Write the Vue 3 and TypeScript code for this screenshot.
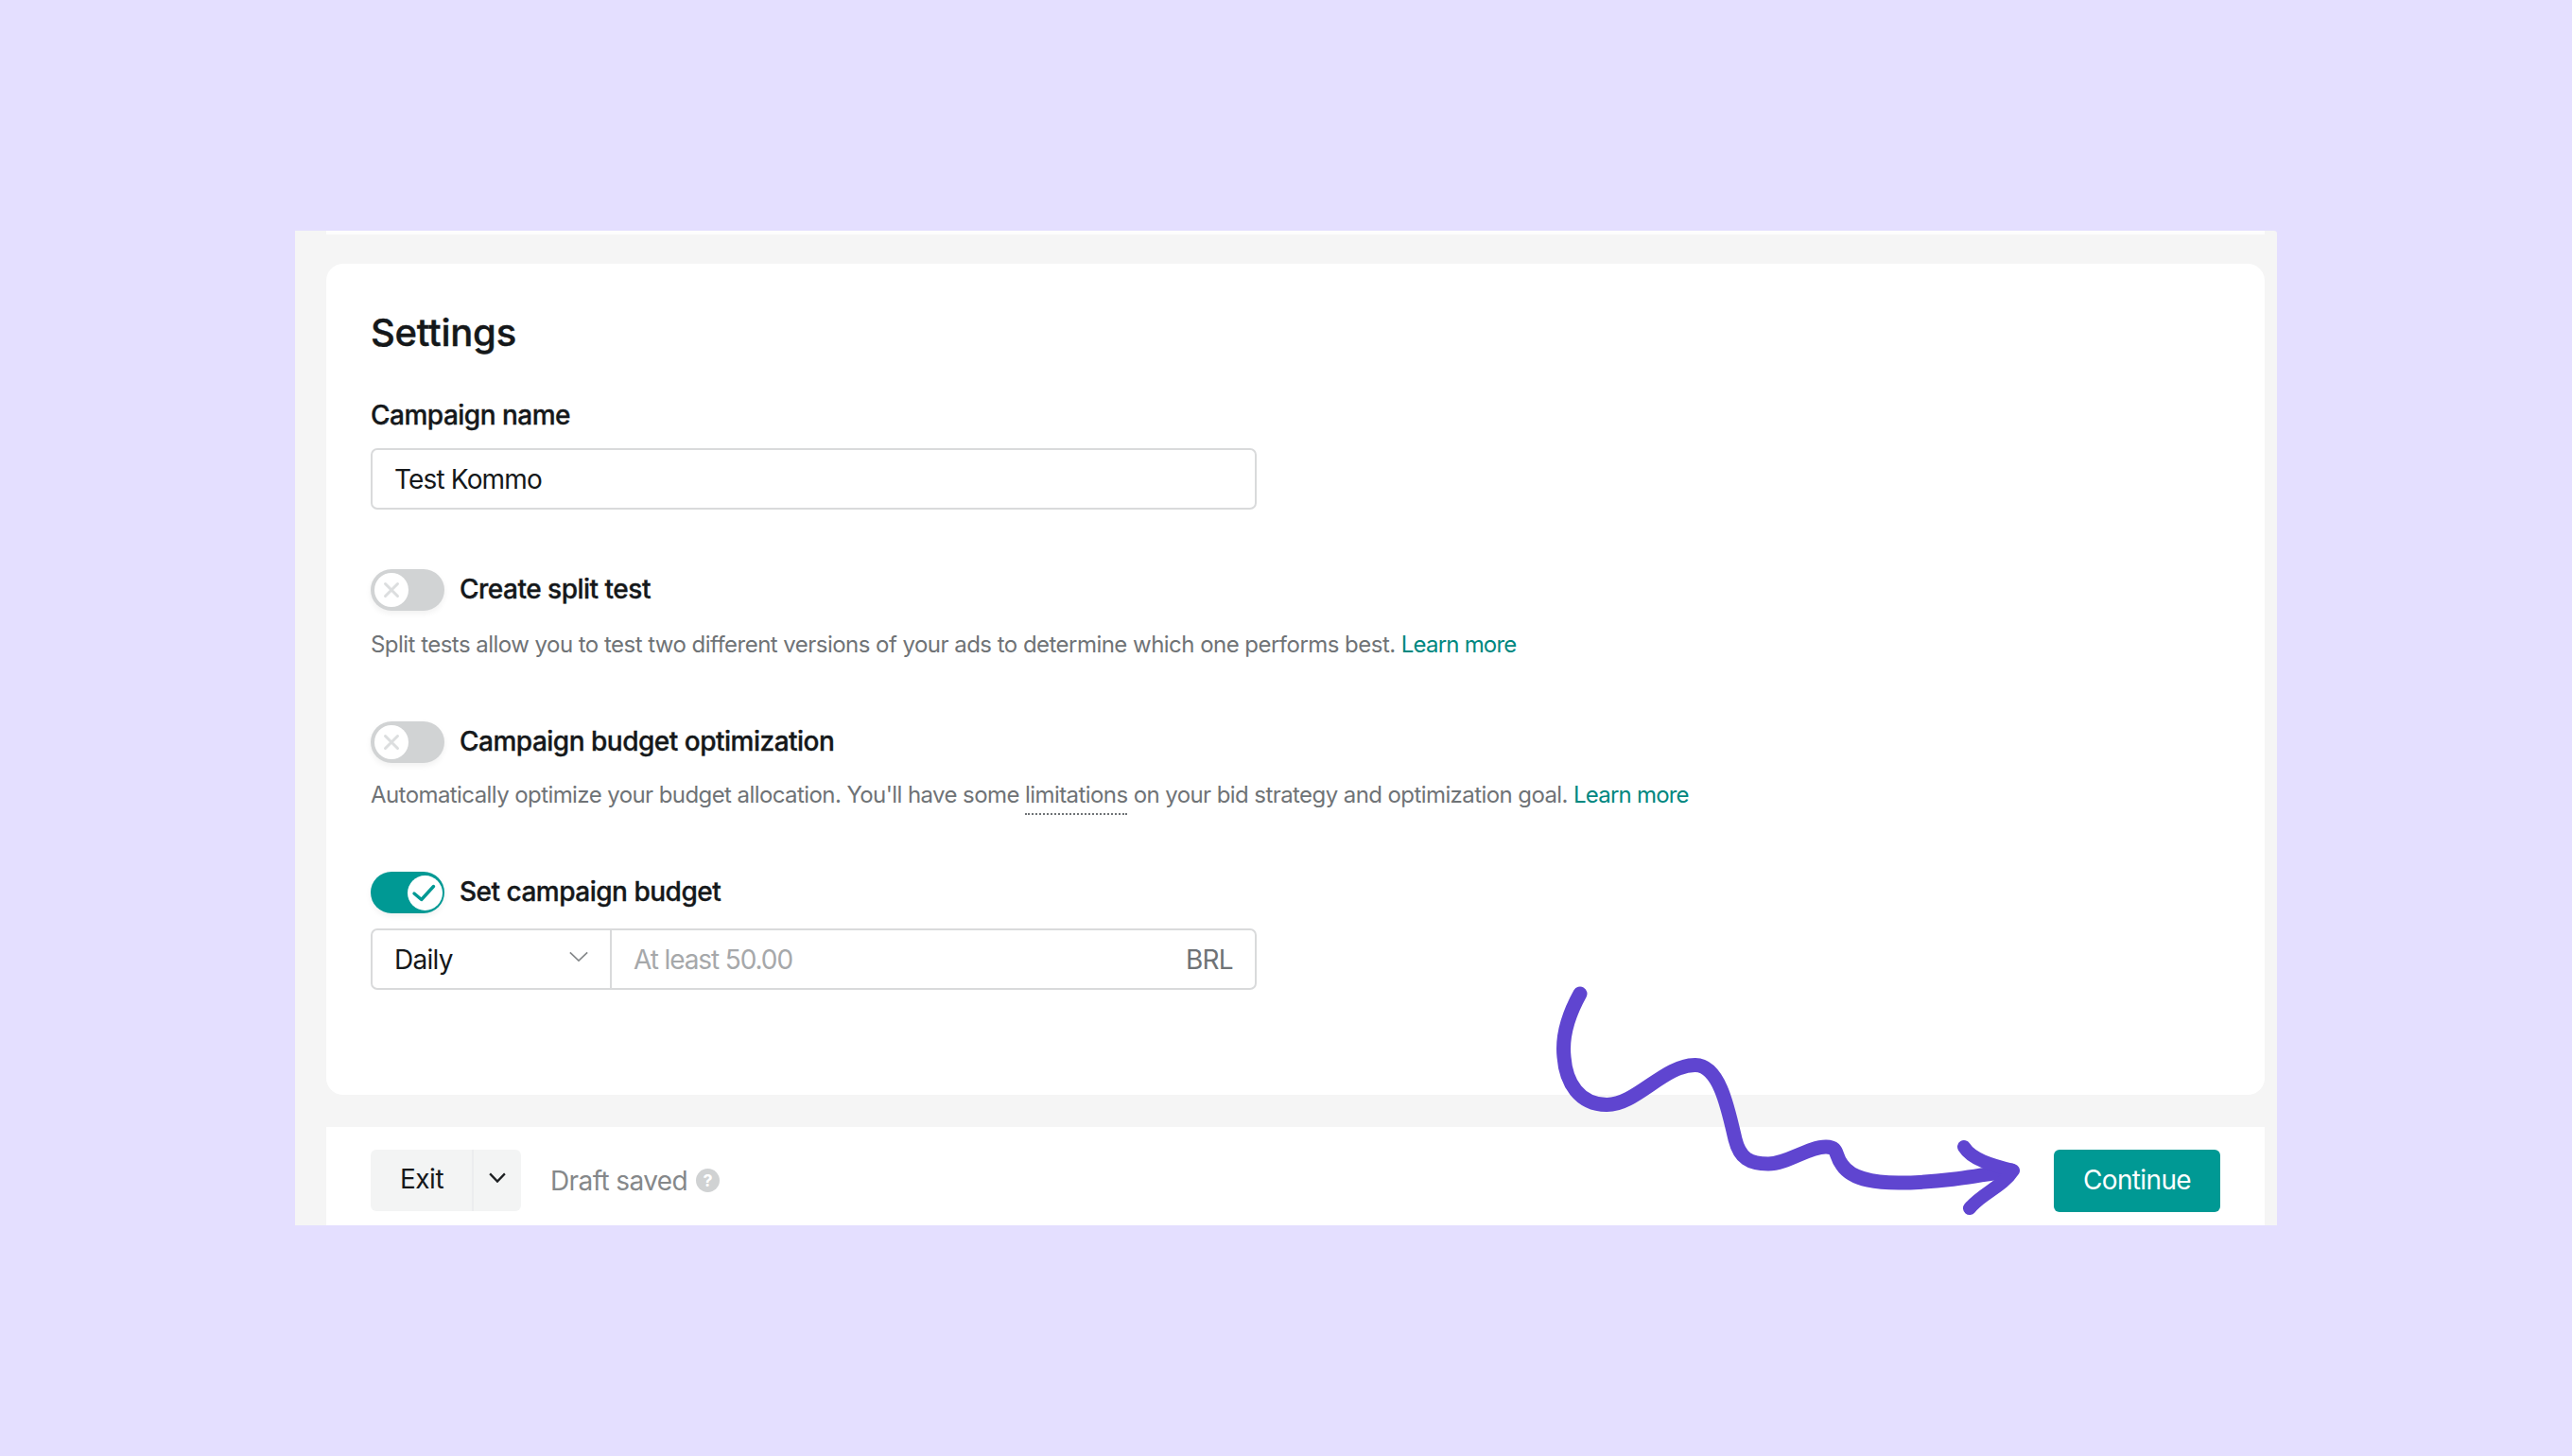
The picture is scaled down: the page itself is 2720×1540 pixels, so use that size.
<template>
  <div class="page">
    <div class="frame">
      <div class="top-edge"></div>
      <section class="card">
        <h1 class="title">Settings</h1>
        <div class="label">Campaign name</div>
        <div class="field name-field">Test Kommo</div>

        <div class="toggle-row first">
          <span class="toggle">
            <span class="knob">
              <svg viewBox="0 0 36 36" class="knob-icon">
                <path d="M11.5 11.5l13 13M24.5 11.5l-13 13" stroke="#dcdedf" stroke-width="3" stroke-linecap="round" fill="none" />
              </svg>
            </span>
          </span>
          <span class="label">Create split test</span>
        </div>
        <p class="desc first-desc">
          Split tests allow you to test two different versions of your ads to determine which one performs best.
          <a class="link">Learn more</a>
        </p>

        <div class="toggle-row">
          <span class="toggle">
            <span class="knob">
              <svg viewBox="0 0 36 36" class="knob-icon">
                <path d="M11.5 11.5l13 13M24.5 11.5l-13 13" stroke="#dcdedf" stroke-width="3" stroke-linecap="round" fill="none" />
              </svg>
            </span>
          </span>
          <span class="label">Campaign budget optimization</span>
        </div>
        <p class="desc">
          Automatically optimize your budget allocation. You'll have some
          <span class="dotted">limitations</span>
          on your bid strategy and optimization goal.
          <a class="link">Learn more</a>
        </p>

        <div class="toggle-row">
          <span class="toggle on">
            <span class="knob">
              <svg viewBox="0 0 37 37" class="knob-icon">
                <path d="M7 19l7.7 6.5L27.5 11.5" stroke="#009994" stroke-width="3.4" stroke-linecap="round" stroke-linejoin="round" fill="none" />
              </svg>
            </span>
          </span>
          <span class="label">Set campaign budget</span>
        </div>
        <div class="field budget">
          <div class="period">
            <span>Daily</span>
            <svg viewBox="0 0 24 14" class="chev">
              <path d="M1 1.5L12 12L23 1.5" stroke="#85888a" stroke-width="2" fill="none" />
            </svg>
          </div>
          <div class="amount">
            <span class="placeholder">At least 50.00</span>
            <span class="currency">BRL</span>
          </div>
        </div>
      </section>

      <footer class="footer">
        <div class="footer-left">
          <div class="exit">
            <span class="exit-label">Exit</span>
            <span class="exit-more">
              <svg viewBox="0 0 24 14" class="chev small">
                <path d="M1.5 1.5L12 12.5L22.5 1.5" stroke="#1c1f21" stroke-width="3" fill="none" />
              </svg>
            </span>
          </div>
          <span class="draft">Draft saved</span>
          <span class="help">?</span>
        </div>
        <button class="continue">Continue</button>
      </footer>
    </div>

    <svg class="arrow" viewBox="1640 1040 500 250" width="500" height="250">
      <path :d="arrowBody" class="stroke body" />
      <path :d="arrowHead" class="stroke head" />
    </svg>
  </div>
</template>

<script setup lang="ts">
// hand drawn arrow, in page coordinates
const arrowBody =
  "M1671 1051C1656 1078 1652 1100 1654 1118C1656 1145 1670 1168 1699 1168.5" +
  "C1730 1169 1760 1126 1793 1126.5C1818 1127 1827 1170 1835 1205" +
  "C1840 1225 1850 1231 1870 1231C1890 1231 1912 1213 1931 1213" +
  "C1945 1213 1940 1222 1948 1232C1960 1250 1990 1251 2008 1251C2050 1251 2090 1244 2127 1238";
const arrowHead = "M2077 1213C2085 1226 2105 1232 2129 1238C2118 1255 2096 1262 2083 1278";
</script>

<style>
html,
body {
  margin: 0;
  background: #e4dfff;
}
</style>

<style scoped>
.page {
  position: relative;
  width: 2720px;
  height: 1540px;
  padding: 244px 312px 0;
  box-sizing: border-box;
  background: #e4dfff;
  font-family: Inter, "Liberation Sans", sans-serif;
  color: #15181a;
}

.frame {
  display: flex;
  flex-direction: column;
  height: 1052px;
  padding: 0 13px 0 33px;
  box-sizing: border-box;
  background: #f5f5f5;
  border-top-right-radius: 3px;
}

.top-edge {
  height: 4px;
  margin-bottom: 31px;
  background: #fdfdfd;
}

.card {
  height: 879px;
  margin-bottom: 34px;
  padding: 49px 47px 0;
  box-sizing: border-box;
  background: #fff;
  border-radius: 18px;
}

.title {
  margin: 0;
  font-size: 40px;
  line-height: 48px;
  font-weight: 500;
  letter-spacing: -0.25px;
  -webkit-text-stroke: 0.4px #15181a;
}

.label {
  font-size: 28px;
  line-height: 36px;
  font-weight: 500;
  letter-spacing: -0.5px;
  -webkit-text-stroke: 0.35px #15181a;
}

.card > .label {
  margin-top: 45px;
}

.field {
  width: 937px;
  height: 65px;
  box-sizing: border-box;
  border: 2px solid #d9dadb;
  border-radius: 7px;
  font-size: 28px;
  letter-spacing: -0.7px;
}

.name-field {
  margin-top: 17px;
  padding: 0 23px;
  line-height: 63px;
  letter-spacing: -0.85px;
}

.toggle-row {
  display: flex;
  align-items: center;
  gap: 16px;
  margin-top: 63px;
}

.toggle-row .label {
  padding-bottom: 3px;
}

.toggle {
  display: flex;
  align-items: center;
  width: 78px;
  height: 44px;
  padding: 0 4px;
  box-sizing: border-box;
  background: #d1d3d4;
  border-radius: 22px;
  box-shadow: 0 3px 6px rgba(0, 0, 0, 0.06);
}

.toggle.on {
  justify-content: flex-end;
  padding: 0 2px;
  background: #009994;
}

.knob {
  width: 36px;
  height: 36px;
  border-radius: 50%;
  background: #fff;
}

.on .knob,
.on .knob-icon {
  width: 37px;
  height: 37px;
}

.knob-icon {
  display: block;
  width: 36px;
  height: 36px;
}

.desc {
  margin: 16px 0 0;
  font-size: 24px;
  line-height: 36px;
  letter-spacing: -0.58px;
  color: #6f7376;
}

.first-desc {
  margin-top: 18px;
  letter-spacing: -0.53px;
}

.link {
  color: #00877f;
  letter-spacing: -0.8px;
}

.dotted {
  padding-bottom: 5px;
  border-bottom: 2px dotted #6f7376;
}

.budget {
  display: flex;
  margin-top: 16px;
}

.period {
  display: flex;
  align-items: center;
  justify-content: space-between;
  width: 253px;
  padding: 0 23px;
  box-sizing: border-box;
  border-right: 2px solid #d9dadb;
}

.chev {
  width: 20px;
  height: 12px;
  margin-top: -6px;
}

.chev.small {
  width: 18px;
  height: 11px;
  margin-top: -6px;
}

.amount {
  display: flex;
  flex: 1;
  align-items: center;
  justify-content: space-between;
  padding: 0 23px;
}

.placeholder {
  color: #a6a8aa;
  letter-spacing: -1.1px;
}

.currency {
  color: #6f7376;
}

.footer {
  display: flex;
  flex: 1;
  align-items: flex-start;
  justify-content: space-between;
  padding: 24px 47px 0;
  background: #fff;
}

.footer-left {
  display: flex;
  align-items: center;
  height: 65px;
}

.exit {
  display: flex;
  width: 159px;
  height: 65px;
  margin-right: 31px;
  background: #f3f4f4;
  border-radius: 6px;
  font-size: 28px;
  line-height: 63px;
  letter-spacing: -0.5px;
}

.exit-label {
  width: 109px;
  padding-left: 31px;
  box-sizing: border-box;
  border-right: 2px solid #ecedee;
}

.exit-more {
  display: flex;
  flex: 1;
  align-items: center;
  justify-content: center;
}

.draft {
  font-size: 28px;
  letter-spacing: -0.6px;
  color: #85888a;
}

.help {
  width: 25px;
  height: 25px;
  margin-left: 9px;
  border-radius: 50%;
  background: #d0d2d3;
  color: #fff;
  font-size: 18px;
  font-weight: 700;
  line-height: 25px;
  text-align: center;
}

.continue {
  width: 176px;
  height: 66px;
  padding: 0 0 2px;
  border: 0;
  border-radius: 6px;
  background: #009994;
  color: #fff;
  font-family: inherit;
  font-size: 28px;
  letter-spacing: -0.65px;
}

.arrow {
  position: absolute;
  left: 1640px;
  top: 1040px;
}

.stroke {
  fill: none;
  stroke: #5f45d0;
  stroke-linecap: round;
  stroke-linejoin: round;
}

.body {
  stroke-width: 15;
}

.head {
  stroke-width: 14;
}
</style>
